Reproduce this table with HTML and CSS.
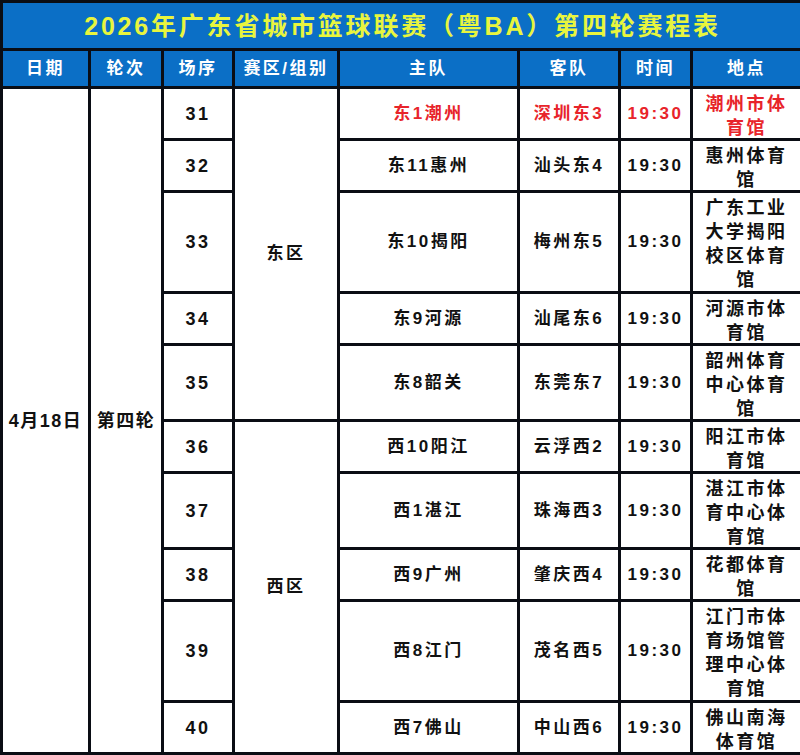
FILE: index.html
```html
<!DOCTYPE html>
<html lang="zh-CN">
<head>
<meta charset="utf-8">
<title>2026年广东省城市篮球联赛（粤BA）第四轮赛程表</title>
<link rel="stylesheet" href="styles.css">
</head>
<body>
<table class="sched">
  <colgroup>
    <col class="c-date"><col class="c-round"><col class="c-no"><col class="c-zone">
    <col class="c-home"><col class="c-away"><col class="c-time"><col class="c-venue">
  </colgroup>
  <thead>
    <tr class="title-row"><th colspan="8" class="title">2026年广东省城市篮球联赛（粤BA）第四轮赛程表</th></tr>
    <tr class="head-row">
      <th>日期</th><th>轮次</th><th>场序</th><th>赛区/组别</th><th>主队</th><th>客队</th><th>时间</th><th>地点</th>
    </tr>
  </thead>
  <tbody>
    <tr class="r2 hl">
      <td rowspan="10" class="date">4月18日</td>
      <td rowspan="10" class="round">第四轮</td>
      <td class="no">31</td>
      <td rowspan="5" class="zone">东区</td>
      <td>东1潮州</td><td>深圳东3</td><td class="time">19:30</td><td class="venue">潮州市体育馆</td>
    </tr>
    <tr class="r2"><td class="no">32</td><td>东11惠州</td><td>汕头东4</td><td class="time">19:30</td><td class="venue">惠州体育馆</td></tr>
    <tr class="r4"><td class="no">33</td><td>东10揭阳</td><td>梅州东5</td><td class="time">19:30</td><td class="venue">广东工业大学揭阳校区体育馆</td></tr>
    <tr class="r2"><td class="no">34</td><td>东9河源</td><td>汕尾东6</td><td class="time">19:30</td><td class="venue">河源市体育馆</td></tr>
    <tr class="r3"><td class="no">35</td><td>东8韶关</td><td>东莞东7</td><td class="time">19:30</td><td class="venue">韶州体育中心体育馆</td></tr>
    <tr class="r2">
      <td class="no">36</td>
      <td rowspan="5" class="zone">西区</td>
      <td>西10阳江</td><td>云浮西2</td><td class="time">19:30</td><td class="venue">阳江市体育馆</td>
    </tr>
    <tr class="r3"><td class="no">37</td><td>西1湛江</td><td>珠海西3</td><td class="time">19:30</td><td class="venue">湛江市体育中心体育馆</td></tr>
    <tr class="r2"><td class="no">38</td><td>西9广州</td><td>肇庆西4</td><td class="time">19:30</td><td class="venue">花都体育馆</td></tr>
    <tr class="r4"><td class="no">39</td><td>西8江门</td><td>茂名西5</td><td class="time">19:30</td><td class="venue">江门市体育场馆管理中心体育馆</td></tr>
    <tr class="r2"><td class="no">40</td><td>西7佛山</td><td>中山西6</td><td class="time">19:30</td><td class="venue">佛山南海体育馆</td></tr>
  </tbody>
</table>
</body>
</html>
```
FILE: styles.css
```css
html, body {
  margin: 0;
  padding: 0;
  background: #ffffff;
}
body {
  font-family: "Liberation Sans", "Noto Sans CJK SC", sans-serif;
  font-weight: bold;
  color: #111;
}
.sched {
  width: 800px;
  border-collapse: collapse;
  table-layout: fixed;
}
.c-date { width: 88px; }
.c-round { width: 73px; }
.c-no { width: 71px; }
.c-zone { width: 105px; }
.c-home { width: 180px; }
.c-away { width: 101px; }
.c-time { width: 72px; }
.c-venue { width: 110px; }

.sched th, .sched td {
  border: 3px solid #0a0d14;
  text-align: center;
  vertical-align: middle;
  padding: 0;
  font-size: 17px;
  line-height: 24px;
  letter-spacing: 2.5px;
}
.title-row th {
  height: 45px;
  background: #0b6fc6;
  color: #e8f53e;
  font-size: 25px;
  letter-spacing: 2.8px;
  padding-left: 2px;
  font-weight: bold;
}
.head-row th {
  height: 35px;
  background: #0b6fc6;
  color: #ffffff;
  font-weight: bold;
}
.r2 td { height: 49px; }
.r3 td { height: 73px; }
.r4 td { height: 98px; }
.sched td.venue {
  font-family: "Noto Sans CJK SC", sans-serif;
  font-size: 18px;
  padding: 0 6px;
  letter-spacing: 2.5px;
  line-height: 24px;
}
.sched td.time {
  letter-spacing: 2.5px;
}
.sched td.no {
  font-size: 18px;
}
.hl td:not(.date):not(.round):not(.no):not(.zone) {
  color: #e8242a;
}
.sched td.date,
.sched td.round {
  font-size: 18px;
  letter-spacing: 1.5px;
}
```
